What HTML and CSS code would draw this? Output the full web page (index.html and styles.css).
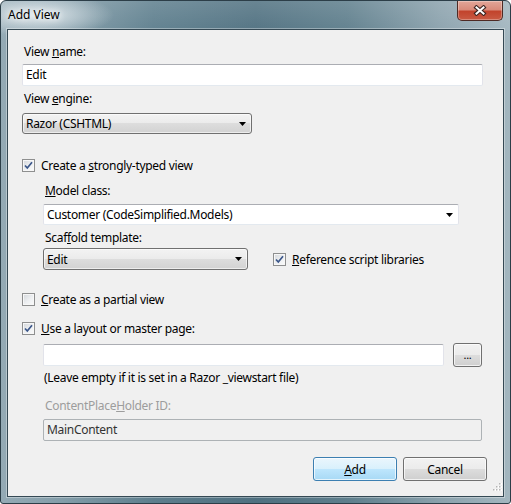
FILE: index.html
```html
<!DOCTYPE html>
<html lang="en">
<head>
  <meta charset="UTF-8" />
  <title>Add View</title>
  <link rel="stylesheet" href="styles.css">
</head>
<body>

  <div class="window">
    <div class="titlebar">
      <span class="title">Add View</span>
      <span class="close" title="Close">
        <svg width="14" height="11" viewBox="0 0 14 11">
          <path d="M3.5 2.5 L10.5 8.5 M10.5 2.5 L3.5 8.5" stroke="#3b2522" stroke-width="4.2" stroke-linecap="square" />
          <path d="M3.5 2.5 L10.5 8.5 M10.5 2.5 L3.5 8.5" stroke="#fff" stroke-width="2" stroke-linecap="square" />
        </svg>
      </span>
    </div>

    <div class="client">
      <div class="label first">View <u>n</u>ame:</div>
      <div class="textbox name-box">Edit</div>

      <div class="label">View <u>e</u>ngine:</div>
      <div class="combo engine-box">
        <span>Razor (CSHTML)</span>
        <svg class="arrow" width="7" height="4" viewBox="0 0 7 4"><polygon points="0,0 7,0 3.5,4" fill="#000" /></svg>
      </div>

      <div class="check-row typed">
        <span class="check"><svg width="11" height="11" viewBox="0 0 11 11"><path d="M2 5.5 L4.3 8 L9 2.3" fill="none" stroke="#3b5689" stroke-width="1.7" /></svg></span>
        <span>Create a <u>s</u>trongly-typed view</span>
      </div>

      <div class="indent">
        <div class="label model-label"><u>M</u>odel class:</div>
        <div class="textbox model-box">
          <span>Customer (CodeSimplified.Models)</span>
          <svg class="arrow" width="7" height="4" viewBox="0 0 7 4"><polygon points="0,0 7,0 3.5,4" fill="#000" /></svg>
        </div>

        <div class="label">Scaf<u>f</u>old template:</div>
        <div class="scaffold-row">
          <div class="combo scaffold-box">
            <span>Edit</span>
            <svg class="arrow" width="7" height="4" viewBox="0 0 7 4"><polygon points="0,0 7,0 3.5,4" fill="#000" /></svg>
          </div>
          <div class="check-row">
            <span class="check"><svg width="11" height="11" viewBox="0 0 11 11"><path d="M2 5.5 L4.3 8 L9 2.3" fill="none" stroke="#3b5689" stroke-width="1.7" /></svg></span>
            <span><u>R</u>eference script libraries</span>
          </div>
        </div>
      </div>

      <div class="check-row partial">
        <span class="check"></span>
        <span><u>C</u>reate as a partial view</span>
      </div>

      <div class="check-row layout">
        <span class="check"><svg width="11" height="11" viewBox="0 0 11 11"><path d="M2 5.5 L4.3 8 L9 2.3" fill="none" stroke="#3b5689" stroke-width="1.7" /></svg></span>
        <span><u>U</u>se a layout or master page:</span>
      </div>

      <div class="indent">
        <div class="layout-row">
          <div class="textbox layout-box"></div>
          <button class="btn browse">...</button>
        </div>
        <div class="note">(Leave empty if it is set in a Razor _viewstart file)</div>
        <div class="label disabled">ContentPlace<u>H</u>older ID:</div>
        <div class="textbox readonly">MainContent</div>
      </div>

      <div class="actions">
        <button class="btn default"><u>A</u>dd</button>
        <button class="btn">Cancel</button>
      </div>

      <svg class="grip" width="11" height="11" viewBox="0 0 11 11">
        <rect x="9" y="0" width="2" height="2" fill="#fff" /><rect x="8" y="0" width="1.5" height="1.5" fill="#b5b5b5" />
        <rect x="6" y="3" width="2" height="2" fill="#fff" /><rect x="5" y="3" width="1.5" height="1.5" fill="#b5b5b5" />
        <rect x="9" y="3" width="2" height="2" fill="#fff" /><rect x="8" y="3" width="1.5" height="1.5" fill="#b5b5b5" />
        <rect x="3" y="6" width="2" height="2" fill="#fff" /><rect x="2" y="6" width="1.5" height="1.5" fill="#b5b5b5" />
        <rect x="6" y="6" width="2" height="2" fill="#fff" /><rect x="5" y="6" width="1.5" height="1.5" fill="#b5b5b5" />
        <rect x="9" y="6" width="2" height="2" fill="#fff" /><rect x="8" y="6" width="1.5" height="1.5" fill="#b5b5b5" />
      </svg>
    </div>
  </div>

</body>
</html>
```

FILE: styles.css
```css
* {
  box-sizing: border-box;
}

body {
  margin: 0;
  background: #fff;
  font-family: 'Noto Sans', sans-serif;
  font-size: 12px;
  letter-spacing: -0.3px;
  color: #000;
}

.window {
  width: 511px;
  height: 504px;
  padding: 0 6px 6px;
  border: 1px solid #2c3e48;
  border-radius: 6px 6px 3px 3px;
  display: flex;
  flex-direction: column;
  background:
    radial-gradient(ellipse 75px 22px at 38px 14px, rgba(226, 234, 238, 0.95), rgba(226, 234, 238, 0)),
    linear-gradient(180deg, rgba(255, 255, 255, 0.15), rgba(255, 255, 255, 0) 40px),
    linear-gradient(90deg, #94aab5 0%, #839da9 12%, #5d7e8d 30%, #4f7080 50%, #5e7e8c 68%, #8aa1ac 86%, #a3b6bf 100%);
}

.titlebar {
  height: 28px;
  display: flex;
  justify-content: space-between;
  align-items: flex-start;
}

.title {
  padding: 6px 0 0 1px;
  line-height: 15px;
  letter-spacing: 0;
  text-shadow: 0 0 6px #fff, 0 0 10px #fff;
}

.close {
  width: 46px;
  height: 20px;
  margin-right: 1px;
  border: 1px solid #4e2a24;
  border-top: none;
  border-radius: 0 0 5px 5px;
  display: flex;
  align-items: center;
  justify-content: center;
  background: linear-gradient(#e2a699 0%, #d98b7b 45%, #c2442d 55%, #c95a43 100%);
  box-shadow: inset 0 0 0 1px rgba(255, 255, 255, 0.3);
}

.client {
  position: relative;
  height: 468px;
  border: 1px solid #354954;
  box-shadow: 0 0 0 1px rgba(255, 255, 255, 0.35);
  background: #f0f0f0;
  padding: 0 16px 0 14px;
}

.label {
  margin-top: 5px;
  padding-left: 2px;
  line-height: 15px;
}

.label.first {
  margin-top: 14px;
}

.label.disabled {
  margin-top: 13px;
  color: #9d9d9d;
}

.textbox {
  height: 22px;
  margin-top: 5px;
  padding: 0 3px;
  line-height: 20px;
  background: #fff;
  border: 1px solid;
  border-color: #abadb3 #e2e3ea #e3e9ef #e2e3ea;
  border-radius: 2px;
  display: flex;
  align-items: center;
  justify-content: space-between;
}

.name-box {
  width: 461px;
}

.model-box {
  width: 416px;
  height: 21px;
  margin-top: 6px;
  padding-right: 5px;
}

.combo {
  height: 21px;
  margin-top: 7px;
  padding: 0 5px 0 3px;
  border: 1px solid #707070;
  border-radius: 3px;
  display: flex;
  align-items: center;
  justify-content: space-between;
  background: linear-gradient(#f3f3f3 0%, #ebebeb 50%, #dddddd 50%, #d2d2d2 100%);
  box-shadow: inset 0 0 0 1px rgba(255, 255, 255, 0.6);
}

.engine-box {
  width: 230px;
}

.check-row {
  display: flex;
  align-items: center;
  gap: 6px;
  line-height: 15px;
}

.check-row.typed {
  margin-top: 24px;
}

.check-row.partial {
  margin-top: 22px;
}

.check-row.layout {
  margin-top: 14px;
}

.check {
  width: 13px;
  height: 13px;
  border: 1px solid #8e8f8f;
  display: flex;
  align-items: center;
  justify-content: center;
  background: linear-gradient(135deg, #d3d6da 0%, #eef0f2 55%, #fbfbfb 100%);
  box-shadow: inset 0 0 0 1px #f7f7f7;
}

.indent {
  margin-left: 21px;
}

.model-label {
  margin-top: 10px;
}

.scaffold-row {
  margin-top: 3px;
  display: flex;
  align-items: center;
  gap: 25px;
}

.scaffold-box {
  width: 205px;
  height: 22px;
  margin-top: 0;
}

.layout-row {
  margin-top: 7px;
  display: flex;
  align-items: center;
  gap: 9px;
}

.layout-box {
  width: 401px;
  margin-top: 0;
}

.note {
  margin-top: 3px;
  padding-left: 1px;
  line-height: 15px;
}

.readonly {
  width: 439px;
  margin-top: 6px;
  background: #f0f0f0;
  border-color: #adb2b5;
  color: #333;
}

.btn {
  height: 24px;
  width: 84px;
  padding: 0;
  border: 1px solid #707070;
  border-radius: 3px;
  font: inherit;
  letter-spacing: inherit;
  color: #000;
  background: linear-gradient(#f2f2f2 0%, #ebebeb 50%, #dddddd 50%, #cfcfcf 100%);
  box-shadow: inset 0 0 0 1px rgba(255, 255, 255, 0.7);
}

.btn.browse {
  width: 29px;
  font-size: 11px;
  line-height: 14px;
}

.btn.default {
  border-color: #3c7fb1;
  background: linear-gradient(#eaf6fd 0%, #d9f0fc 50%, #bee6fd 50%, #a7d9f5 100%);
}

.actions {
  margin-top: 16px;
  display: flex;
  justify-content: flex-end;
  gap: 6px;
}

.grip {
  position: absolute;
  right: 1px;
  bottom: 2px;
}
```
